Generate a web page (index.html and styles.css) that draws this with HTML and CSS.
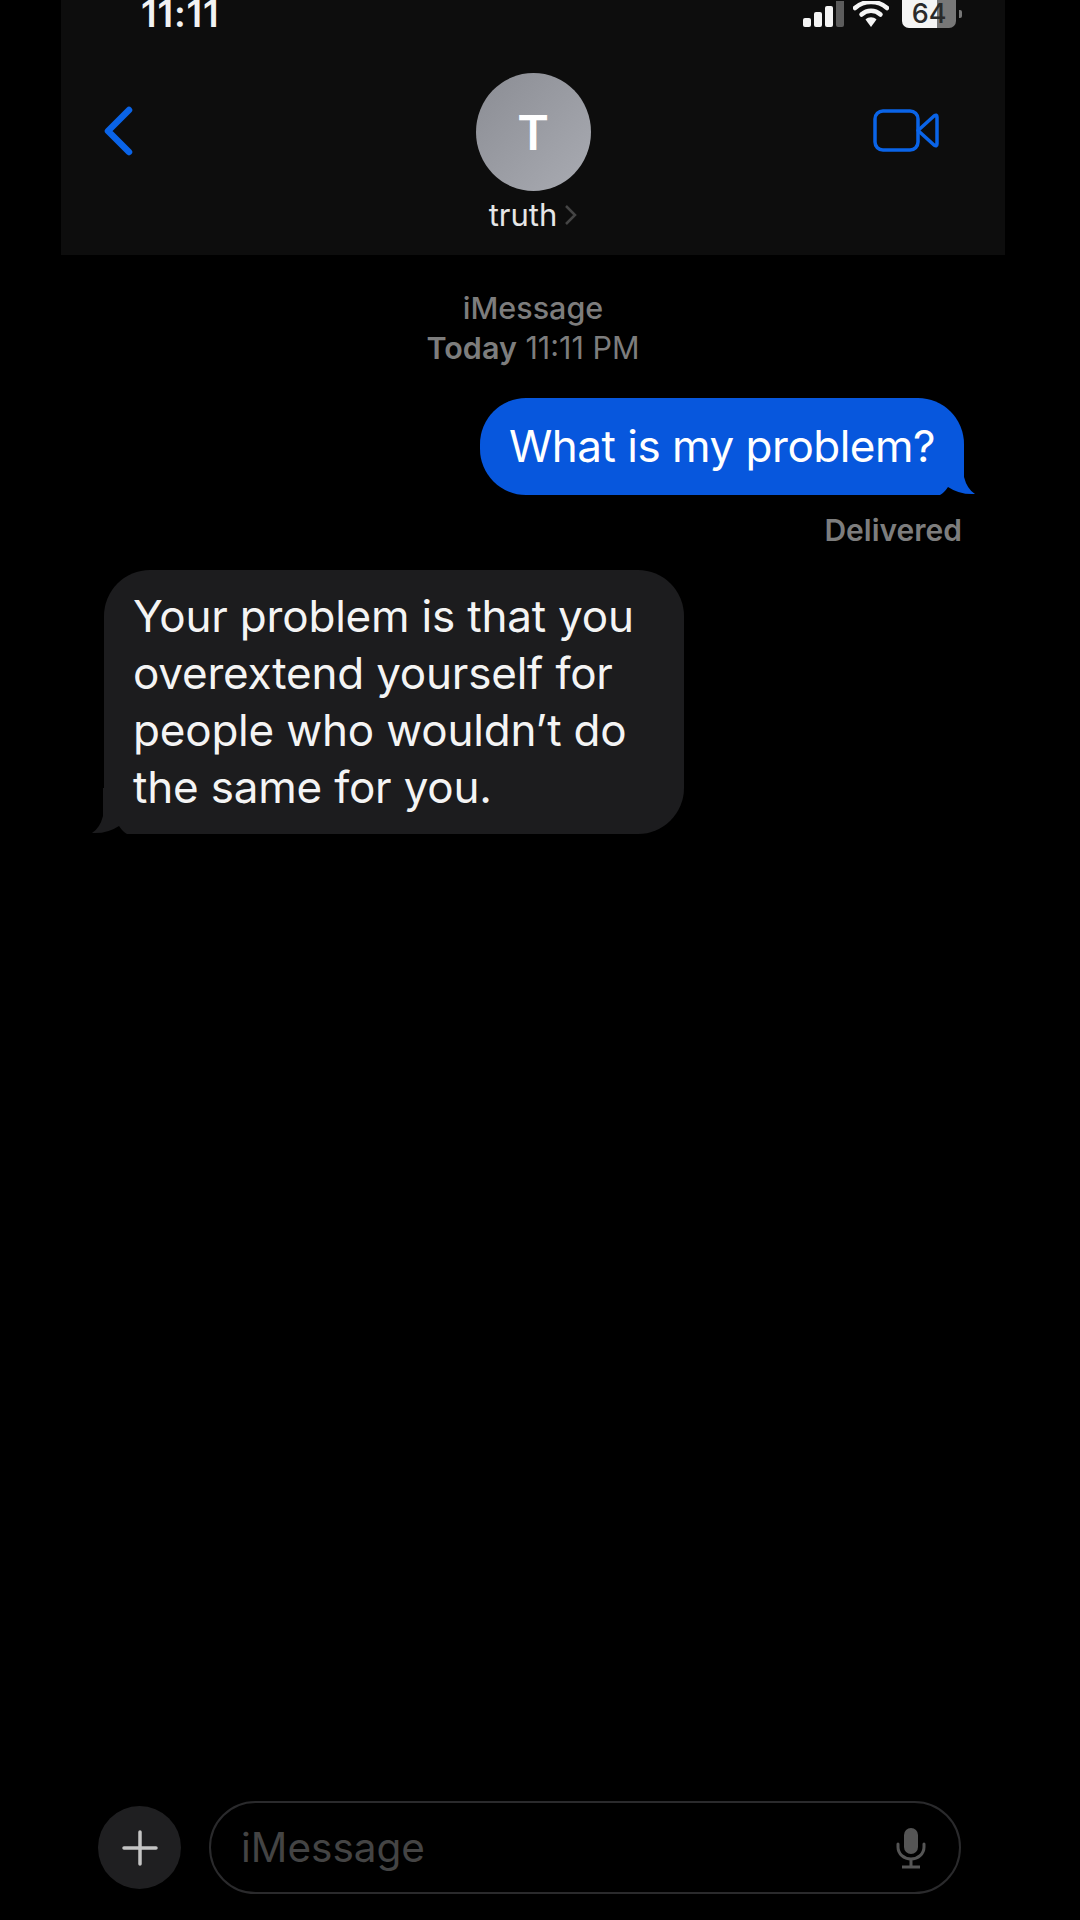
FILE: index.html
```html
<!DOCTYPE html>
<html lang="en">
<head>
    <meta charset="UTF-8">
    <title>Messages</title>
    <link rel="stylesheet" href="styles.css">
</head>
<body>
    <header class="top">
        <div class="status">
            <span class="clock">11:11</span>
            <div class="status-icons">
                <svg class="signal" width="41" height="27" viewBox="0 0 41 27">
                    <rect x="0" y="17" width="8" height="9" rx="2" fill="#f4f4f4"/>
                    <rect x="11" y="11" width="8" height="15" rx="2" fill="#f4f4f4"/>
                    <rect x="22" y="5" width="8" height="21" rx="2" fill="#f4f4f4"/>
                    <rect x="33" y="-3" width="8" height="29" rx="2" fill="#5c5c5c"/>
                </svg>
                <svg class="wifi" width="36" height="27" viewBox="0 0 36 27">
                    <path d="M2 7 C11 -1 25 -1 34 7" fill="none" stroke="#f4f4f4" stroke-width="4.5" stroke-linecap="round"/>
                    <path d="M8.500 13.500 C14 8.500 22 8.500 27.500 13.500" fill="none" stroke="#f4f4f4" stroke-width="4.500" stroke-linecap="round"/>
                    <path d="M12.500 18.500 C15.500 15.500 20.500 15.500 23.500 18.500 L18 26 Z" fill="#f4f4f4"/>
                </svg>
                <div class="battery"><span class="battery-num">64</span></div>
                <span class="battery-tip"></span>
            </div>
        </div>
        <div class="nav">
            <svg class="back" width="30" height="50" viewBox="0 0 30 50">
                <path d="M26 4 L5 25 L26 46" fill="none" stroke="#0a64e8" stroke-width="6.500" stroke-linecap="round" stroke-linejoin="round"/>
            </svg>
            <div class="contact">
                <div class="avatar">T</div>
                <div class="contact-name">truth <svg width="13" height="22" viewBox="0 0 13 22"><path d="M2 2 L11 11 L2 20" fill="none" stroke="#454545" stroke-width="2.500"/></svg></div>
            </div>
            <svg class="video" width="66" height="43" viewBox="0 0 66 43">
                <rect x="2" y="2" width="43" height="39" rx="8" fill="none" stroke="#0a64e8" stroke-width="3.500"/>
                <path d="M45 21.500 L61 7 Q64 5 64 8 L64 35 Q64 38 61 36 Z" fill="none" stroke="#0a64e8" stroke-width="3.500" stroke-linejoin="round"/>
            </svg>
        </div>
    </header>

    <main class="thread">
        <div class="thread-info">
            <div class="thread-service">iMessage</div>
            <div><b>Today</b> 11:11 PM</div>
        </div>
        <div class="bubble sent">
            <svg class="tail tail-sent" width="60" height="60" viewBox="0 0 60 60"><path d="M0 60 L25 60 Q29 58 33 52 Q45 60 60 59 Q52 54 49 42 L49 14 L0 14 Z" fill="#0757dd"/></svg>
            <span class="bubble-text">What is my problem?</span>
        </div>
        <div class="delivered">Delivered</div>
        <div class="bubble received">
            <svg class="tail tail-received" width="60" height="60" viewBox="0 0 60 60"><path d="M60 60 L35 60 Q31 58 27 52 Q15 60 0 59 Q8 54 11 42 L11 14 L60 14 Z" fill="#1c1c1e"/></svg>
            <span class="bubble-text">Your problem is that you<br>overextend yourself for<br>people who wouldn’t do<br>the same for you.</span>
        </div>
    </main>

    <footer class="composer">
        <div class="plus">
            <svg width="36" height="36" viewBox="0 0 36 36"><path d="M18 2 V34 M2 18 H34" stroke="#c4c4c4" stroke-width="3.500" stroke-linecap="round"/></svg>
        </div>
        <div class="input">
            <span class="placeholder">iMessage</span>
            <svg class="mic" width="30" height="42" viewBox="0 0 30 42">
                <rect x="8" y="1" width="14" height="26" rx="7" fill="#555"/>
                <path d="M2 17 V20 C2 27 8 32 15 32 C22 32 28 27 28 20 V17" fill="none" stroke="#555" stroke-width="3" stroke-linecap="round"/>
                <path d="M15 32 V39 M6 40 H24" stroke="#555" stroke-width="3"/>
            </svg>
        </div>
    </footer>
</body>
</html>
```

FILE: styles.css
```css
* {
    box-sizing: border-box;
}

body {
    margin: 0;
    height: 1920px;
    overflow: hidden;
    display: flex;
    flex-direction: column;
    background-color: #000;
    color: #fff;
    font-family: 'Inter', 'Liberation Sans', sans-serif;
}

.top {
    margin: 0 75px 0 61px;
    height: 255px;
    background-color: #0d0d0d;
}

.status {
    display: flex;
    justify-content: space-between;
    align-items: flex-end;
    height: 28px;
    overflow: hidden;
    padding: 0 43px 0 80px;
}

.clock {
    font-size: 37px;
    font-weight: 600;
    line-height: 28px;
    letter-spacing: 0.8px;
    color: #f2f2f2;
}

.status-icons {
    display: flex;
    align-items: flex-end;
    height: 28px;
}

.signal {
    margin-right: 9px;
}

.wifi {
    margin-right: 13px;
}

.battery {
    width: 54px;
    height: 28px;
    border-radius: 0 0 7px 7px;
    background: linear-gradient(to right, #f4f4f4 64%, #777 64%);
    color: #2a2a2a;
    text-align: center;
}

.battery-num {
    font-size: 27px;
    font-weight: 500;
    line-height: 28px;
    display: block;
}

.battery-tip {
    width: 3px;
    height: 8px;
    margin: 0 0 10px 3px;
    border-radius: 0 2px 2px 0;
    background-color: #777;
}

.nav {
    display: grid;
    grid-template-columns: 1fr auto 1fr;
    align-items: start;
    padding: 45px 66px 0;
}

.back {
    margin: 33px 0 0 -24px;
}

.video {
    margin-top: 36px;
    justify-self: end;
}

.contact {
    display: flex;
    flex-direction: column;
    align-items: center;
}

.avatar {
    width: 115px;
    height: 118px;
    border-radius: 50%;
    display: flex;
    justify-content: center;
    align-items: center;
    background: linear-gradient(to bottom right, #8b8d94, #a9abb2);
    font-size: 48px;
    font-weight: 600;
}

.contact-name {
    display: flex;
    align-items: center;
    gap: 7px;
    margin-top: 6px;
    font-size: 31px;
    line-height: 36px;
    color: #e6e6e6;
}

.thread {
    display: flex;
    flex-direction: column;
}

.thread-info {
    margin-top: 33px;
    padding-right: 14px;
    text-align: center;
    font-size: 30.500px;
    line-height: 40px;
    color: #7d7d7d;
}

.thread-service {
    font-weight: 500;
}

.thread-info b {
    font-weight: 600;
}

.bubble {
    position: relative;
    font-size: 44px;
    line-height: 57px;
    white-space: nowrap;
    border-radius: 46px;
}

.bubble-text {
    position: relative;
    display: block;
}

.sent {
    align-self: flex-end;
    margin: 30px 116px 0 0;
    width: 484px;
    height: 97px;
    padding: 20px 0 0 29px;
    letter-spacing: -0.5px;
    background-color: #0757dd;
}

.tail {
    position: absolute;
    bottom: 0;
}

.tail-sent {
    right: -11px;
}

.tail-received {
    left: -12px;
}

.delivered {
    align-self: flex-end;
    margin: 17px 118px 0 0;
    font-size: 30px;
    font-weight: 600;
    line-height: 36px;
    color: #7d7d7d;
}

.received {
    align-self: flex-start;
    margin: 22px 0 0 104px;
    width: 580px;
    height: 264px;
    padding: 18px 0 0 29px;
    letter-spacing: -0.2px;
    color: #f4f4f4;
    background-color: #1c1c1e;
}

.composer {
    display: flex;
    align-items: center;
    gap: 28px;
    margin-top: auto;
    padding: 0 119px 26px 98px;
}

.plus {
    flex: none;
    width: 83px;
    height: 83px;
    border-radius: 50%;
    display: flex;
    justify-content: center;
    align-items: center;
    background-color: #1f1f21;
}

.input {
    flex: 1;
    height: 93px;
    display: flex;
    justify-content: space-between;
    align-items: center;
    padding: 0 33px 0 30px;
    border: 2px solid #2a2a2c;
    border-radius: 47px;
}

.placeholder {
    font-size: 40.500px;
    color: #444;
}
```
